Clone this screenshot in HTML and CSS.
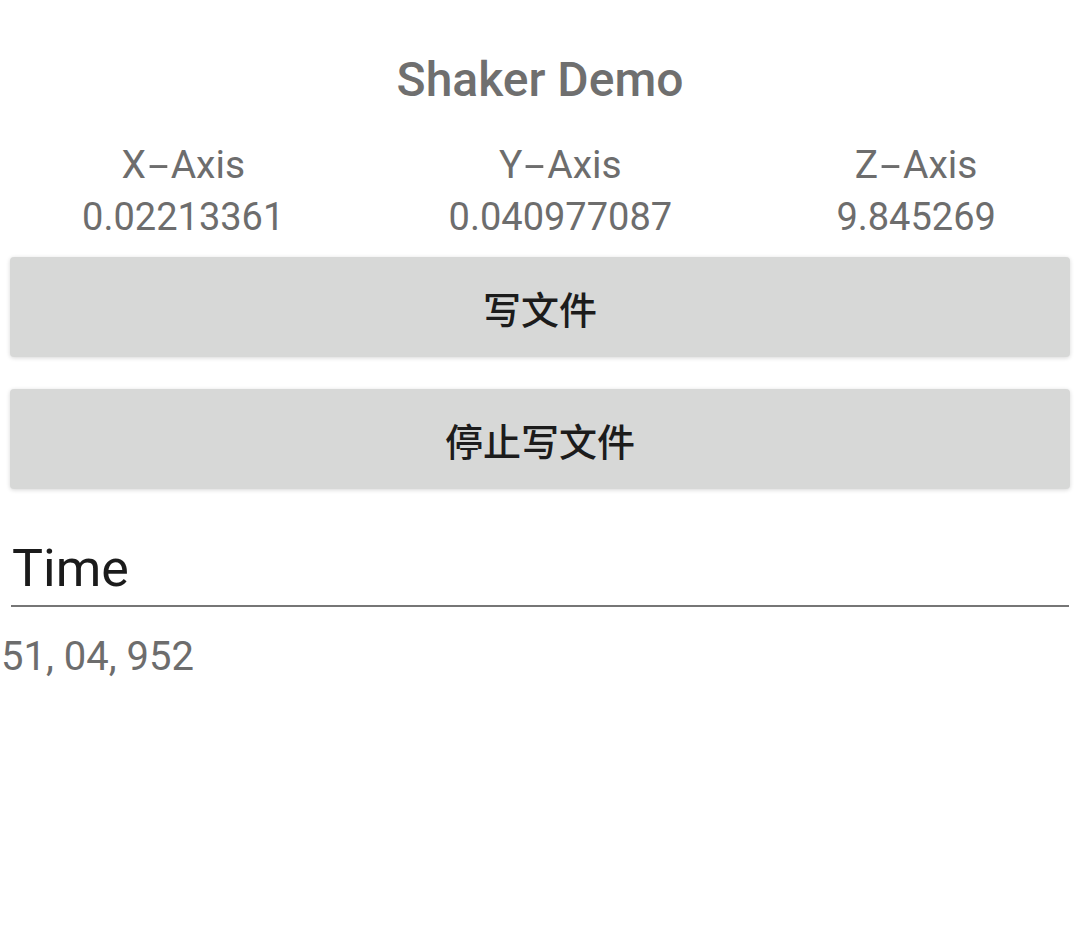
FILE: index.html
```html
<!DOCTYPE html>
<html lang="zh">
<head>
<meta charset="utf-8">
<title>Shaker Demo</title>
<link rel="stylesheet" href="styles.css">
</head>
<body>
<div class="app">
  <h1 class="title">Shaker Demo</h1>
  <div class="axes">
    <div class="axis">
      <div class="axis-label">X<span class="dash">-</span>Axis</div>
      <div class="axis-value">0.02213361</div>
    </div>
    <div class="axis">
      <div class="axis-label">Y<span class="dash">-</span>Axis</div>
      <div class="axis-value">0.040977087</div>
    </div>
    <div class="axis">
      <div class="axis-label">Z<span class="dash">-</span>Axis</div>
      <div class="axis-value">9.845269</div>
    </div>
  </div>
  <div class="buttons">
    <button class="btn">写文件</button>
    <button class="btn">停止写文件</button>
  </div>
  <div class="field">
    <div class="field-input">Time</div>
  </div>
  <div class="output">51, 04, 952</div>
</div>
</body>
</html>
```
FILE: styles.css
```css
* { box-sizing: border-box; }
html, body { margin: 0; padding: 0; background: #fff; }
body {
  font-family: Roboto, "Noto Sans", "Noto Sans CJK SC", sans-serif;
  width: 1080px;
  height: 946px;
  overflow: hidden;
}
.app { display: flex; flex-direction: column; }
.title {
  margin: 52px 0 0;
  height: 56px;
  line-height: 56px;
  text-align: center;
  font-size: 48px;
  font-weight: 500;
  color: #6f6f6f;
}
.axes {
  display: flex;
  justify-content: space-around;
  margin-top: 31px;
  padding-right: 2px;
}
.axis {
  display: flex;
  flex-direction: column;
  align-items: center;
  color: #6d6d6d;
  font-size: 38px;
  line-height: 52px;
}
.axis-label { font-size: 39px; }
.dash {
  display: inline-block;
  margin: 0 7px;
  transform: scaleX(1.9);
}
.buttons {
  display: flex;
  flex-direction: column;
  gap: 32px;
  padding: 0 10px;
  margin-top: 14px;
}
.btn {
  height: 100px;
  border: none;
  border-radius: 4px;
  background: #d7d8d7;
  box-shadow: 0 1px 4px rgba(0,0,0,0.16);
  font-family: "Noto Sans CJK SC", sans-serif;
  font-size: 38px;
  font-weight: 500;
  color: #1c1c1c;
  padding: 0;
}
.field {
  margin: 40px 11px 0;
  border-bottom: 2px solid #767676;
  height: 78px;
}
.field-input {
  padding-top: 6px;
  font-size: 52px;
  line-height: 68px;
  color: #1b1b1b;
  padding-left: 1px;
}
.output {
  margin-top: 24px;
  padding-left: 1px;
  font-size: 40px;
  line-height: 52px;
  color: #6d6d6d;
}
```
